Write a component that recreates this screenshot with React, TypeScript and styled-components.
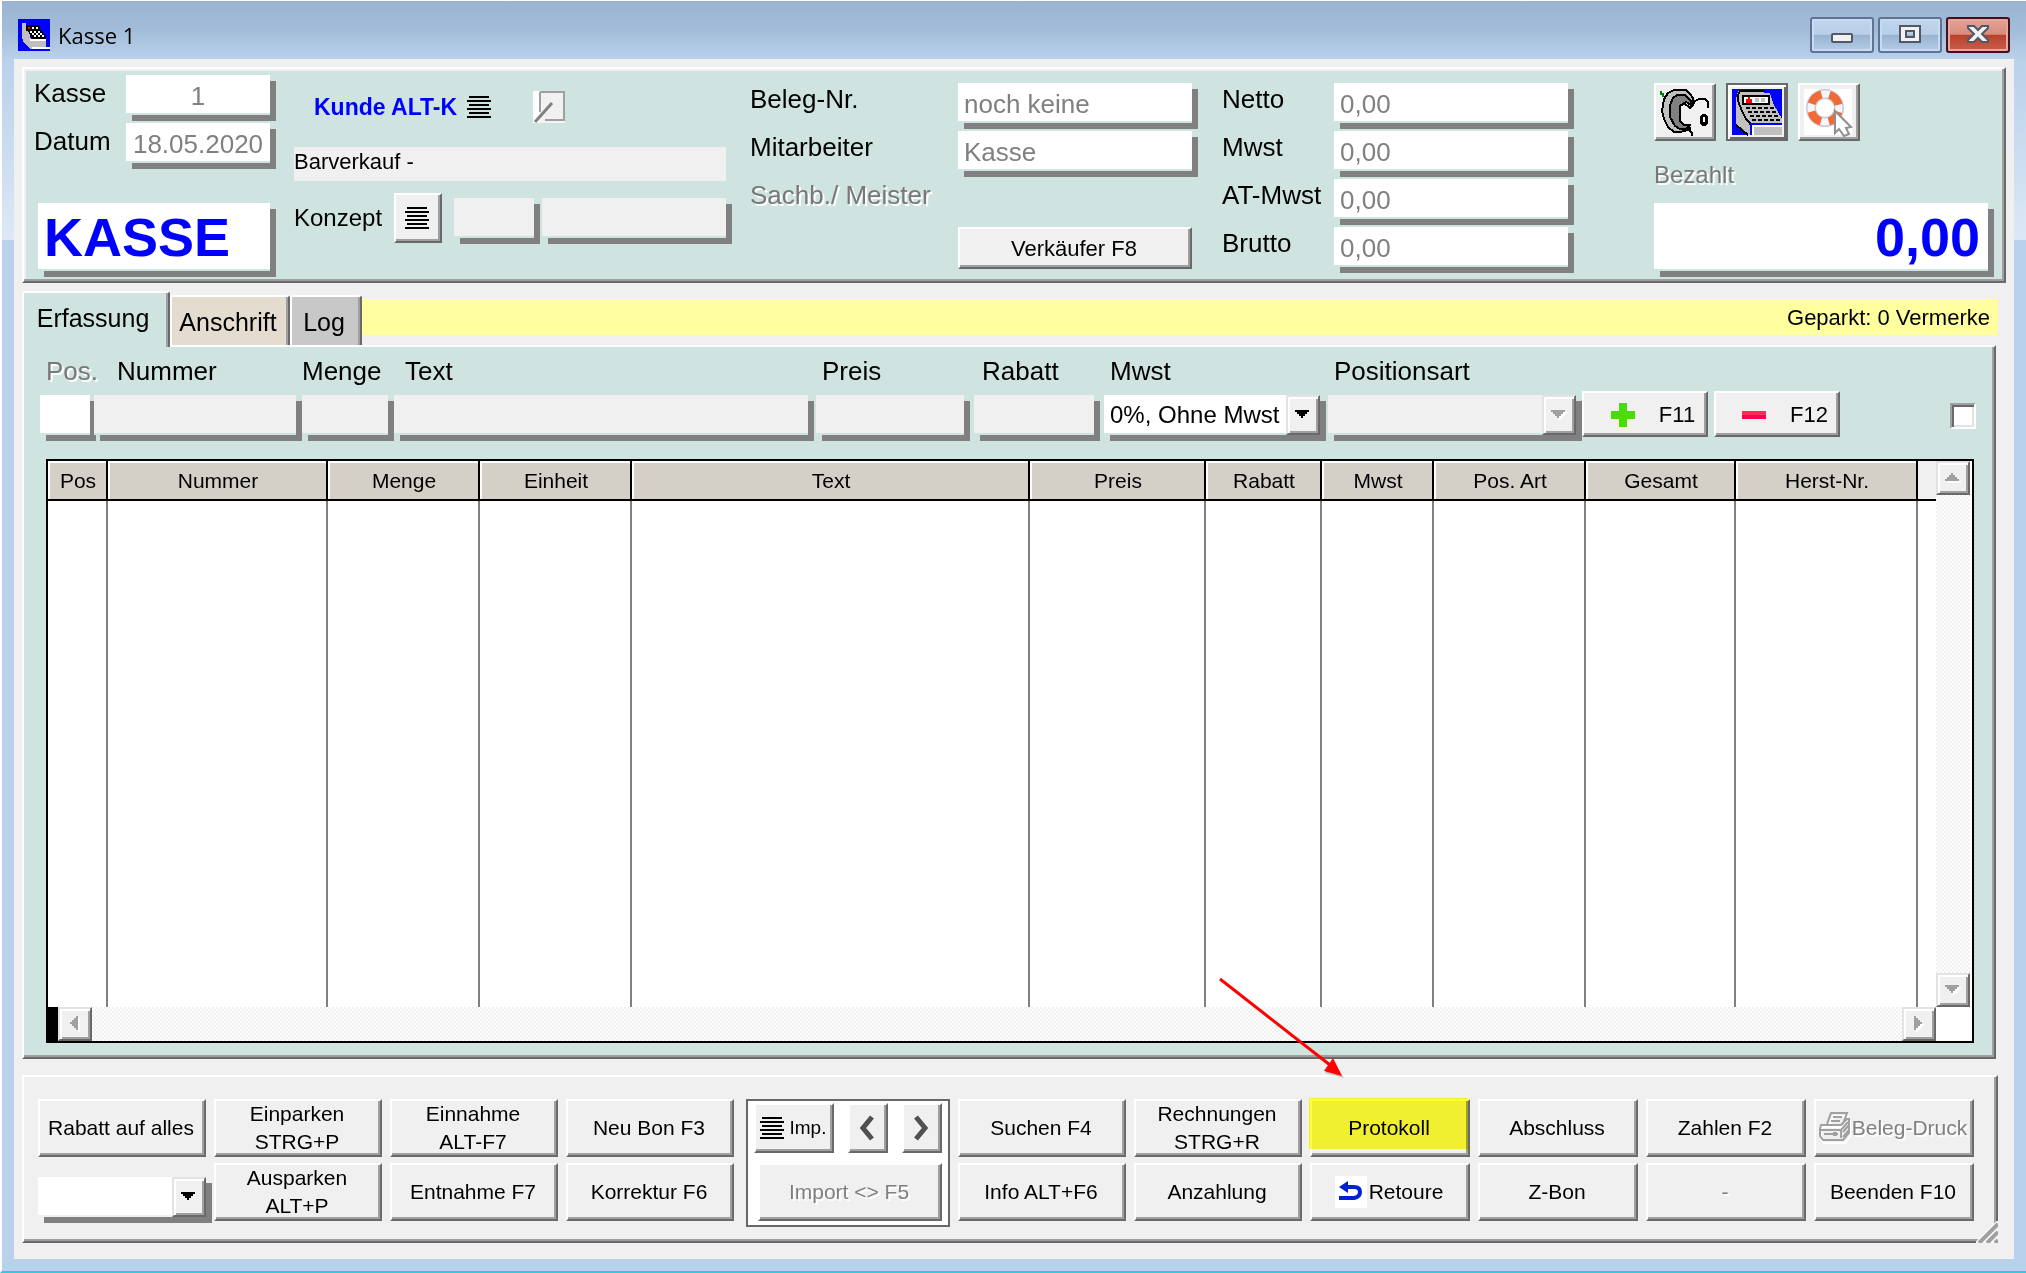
import React from "react";
import styled, { createGlobalStyle, css } from "styled-components";

const color = {
  face: "#f0f0f0",
  panel: "#cfe3e1",
  frame: "#b9d1ea",
  shadow: "#808080",
  mid: "#a0a0a0",
  dark: "#696969",
  header: "#d4d0c8",
  blue: "#0000ff",
};

const raised = css`
  border: 2px solid;
  border-color: #fff ${color.dark} ${color.dark} #fff;
  box-shadow: inset -2px -2px 0 ${color.mid};
`;

const GlobalStyle = createGlobalStyle`
  *, *::before, *::after { box-sizing: border-box; }
  body { margin: 0; background: #fff; }
  body, button, input, select {
    font-family: "Liberation Sans", Arial, sans-serif;
    color: #000;
  }
  button, input, select { margin: 0; padding: 0; border-radius: 0; }
  button:disabled, input:disabled, select:disabled { opacity: 1; }
`;

/* ---------- window frame ---------- */

const Window = styled.div`
  min-height: 100vh;
  display: flex;
  flex-direction: column;
  padding: 0 12px 12px;
  border-top: 1px solid #fff;
  border-left: 2px solid #fff;
  border-bottom: 2px solid #2fcbe0;
  background: linear-gradient(#b9d1ea, #dce8f6) 0 58px / 100% 181px no-repeat, ${color.frame};
`;

const TitleBar = styled.header`
  height: 58px;
  margin: 0 -12px;
  padding: 16px 16px 0;
  display: flex;
  align-items: flex-start;
  background: linear-gradient(#99b4d1, #a3bcd9 50%, ${color.frame});
`;

const TitleIcon = styled.svg`
  width: 32px;
  height: 32px;
  margin-top: 2px;
`;

const Title = styled.h1`
  margin: 0 auto 0 8px;
  font: 400 22px/36px "Open Sans", "Noto Sans", sans-serif;
`;

const WindowButtons = styled.div`
  display: flex;
  gap: 4px;
`;

const WindowButton = styled.button<{ $close?: boolean }>`
  width: 64px;
  height: 36px;
  display: grid;
  place-items: center;
  border: 2px solid ${(p) => (p.$close ? "#43101f" : "#5f7493")};
  border-radius: 3px;
  box-shadow: inset 0 0 0 2px ${(p) => (p.$close ? "#e8a79c" : "#c8dbf0")};
  background: ${(p) =>
    p.$close
      ? "linear-gradient(#e3a398, #d98b7d 48%, #b8402a 50%, #c9614c)"
      : "linear-gradient(#bfd5ec, #b9cfe8 48%, #98b3d0 50%, #b4cde8)"};
`;

const Content = styled.main`
  flex: 1;
  display: flex;
  flex-direction: column;
  padding: 8px 8px 16px;
  background: ${color.face};
`;

/* ---------- shared controls ---------- */

const Button = styled.button<{ $size?: number; $alignEnd?: boolean }>`
  ${raised}
  display: flex;
  align-items: center;
  justify-content: center;
  min-width: 0;
  overflow: hidden;
  padding-right: 2px;
  background: ${color.face};
  font-size: ${(p) => p.$size ?? 21}px;
  line-height: 28px;
  text-align: center;
  white-space: pre-line;
  align-self: ${(p) => (p.$alignEnd ? "end" : "auto")};
  &:disabled {
    color: ${color.shadow};
    text-shadow: 2px 2px 0 #fff;
  }
`;

const Field = styled.input<{ $gray?: boolean; $center?: boolean }>`
  display: block;
  width: 100%;
  height: 40px;
  padding: 4px 6px 0;
  border: 0;
  border-bottom: 2px solid ${color.panel};
  background: ${(p) => (p.$gray ? color.face : "#fff")};
  background-clip: padding-box;
  box-shadow: 6px 6px 0 ${color.shadow};
  color: ${color.shadow};
  font-size: 26px;
  text-align: ${(p) => (p.$center ? "center" : "left")};
`;

const BigField = styled.input<{ $right?: boolean }>`
  display: block;
  width: 100%;
  height: 68px;
  padding: 2px 8px 0 6px;
  border: 0;
  border-bottom: 2px solid ${color.panel};
  background: #fff;
  background-clip: padding-box;
  box-shadow: 6px 6px 0 ${color.shadow};
  color: ${color.blue};
  font-size: 54px;
  font-weight: 700;
  text-align: ${(p) => (p.$right ? "right" : "left")};
`;

const SelectBox = styled.div<{ $gray?: boolean; $ground?: string }>`
  display: grid;
  height: 40px;
  border-bottom: 2px solid ${(p) => p.$ground ?? color.panel};
  background: ${(p) => (p.$gray ? color.face : "#fff")};
  background-clip: padding-box;
  box-shadow: 6px 6px 0 ${color.shadow};
`;

const NativeSelect = styled.select`
  grid-area: 1 / 1;
  width: 100%;
  height: 38px;
  padding: 0 34px 0 6px;
  appearance: none;
  border: 0;
  background: transparent;
  font-size: 24px;
`;

const Arrow = styled.span`
  grid-area: 1 / 1;
  justify-self: end;
  width: 34px;
  height: 40px;
  display: grid;
  place-items: center;
  pointer-events: none;
  border: 2px solid;
  border-color: #e3e3e3 ${color.dark} ${color.dark} #e3e3e3;
  box-shadow: inset 2px 2px 0 #fff, inset -2px -2px 0 ${color.mid};
  background: ${color.face};
`;

/* ---------- header ---------- */

const HeaderPanel = styled.section`
  display: flex;
  height: 216px;
  padding: 0 16px 0 10px;
  border: 2px solid;
  border-color: #fff ${color.dark} ${color.dark} #fff;
  box-shadow: inset -2px -2px 0 ${color.mid}, inset 2px 2px 0 ${color.face};
  background: ${color.panel};
`;

const HeaderGroup = styled.div<{ $width: number; $top: number; $gap: number }>`
  flex: none;
  width: ${(p) => p.$width}px;
  padding-top: ${(p) => p.$top}px;
  margin-right: ${(p) => p.$gap}px;
`;

const LabelRow = styled.div<{ $label: number }>`
  display: grid;
  grid-template-columns: ${(p) => p.$label}px 1fr;
  height: 48px;
  align-items: start;
`;

const Label = styled.label<{ $muted?: boolean; $size?: number; $line?: number }>`
  font-size: ${(p) => p.$size ?? 26}px;
  line-height: ${(p) => p.$line ?? 32}px;
  white-space: nowrap;
  ${(p) =>
    p.$muted &&
    css`
      color: #787878;
      text-shadow: 2px 2px 0 #fff;
    `}
`;

const RegisterName = styled.div`
  padding: 32px 0 0 4px;
`;

const CustomerRow = styled.div`
  display: flex;
  align-items: center;
  height: 32px;
  padding-left: 20px;
`;

const CustomerButton = styled.button`
  display: flex;
  align-items: center;
  gap: 10px;
  margin-right: 42px;
  border: 0;
  background: none;
  color: ${color.blue};
  font-size: 23px;
  font-weight: 700;
`;

const PlainButton = styled.button`
  display: flex;
  border: 0;
  background: none;
`;

const SaleInfo = styled.div`
  height: 34px;
  margin: 24px 0 12px;
  background: ${color.face};
  font-size: 22px;
  line-height: 30px;
`;

const ConceptRow = styled.div`
  display: grid;
  grid-template-columns: 100px 48px 80px 184px;
  align-items: center;
  & > :nth-child(3) { margin-left: 12px; }
  & > :nth-child(4) { margin-left: 20px; }
`;

const ConceptField = styled.div<{ $width: number }>`
  width: ${(p) => p.$width}px;
`;

const ConceptButton = styled(Button)`
  height: 50px;
`;

const SellerButton = styled(Button)`
  grid-column: 2;
  height: 42px;
  padding-top: 2px;
`;

const PaidGroup = styled.div`
  width: 334px;
  margin-left: auto;
  padding-top: 14px;
`;

const ToolIcons = styled.div`
  display: flex;
  gap: 10px;
`;

const ToolButton = styled.button<{ $active?: boolean }>`
  ${raised}
  width: 62px;
  height: 58px;
  background: ${color.face};
  ${(p) =>
    p.$active &&
    css`
      border-color: ${color.dark};
      box-shadow: inset 2px 2px 0 #fff, inset -2px -2px 0 ${color.dark};
    `}
  svg { display: block; }
`;

const PaidLabel = styled(Label)`
  display: block;
  margin: 18px 0 12px;
`;

/* ---------- tabs ---------- */

const TabRow = styled.div`
  display: flex;
  align-items: flex-end;
  height: 54px;
  margin: 8px 8px 0 0;
`;

const Tab = styled.button<{ $bg: string; $width: number; $active?: boolean }>`
  width: ${(p) => p.$width}px;
  height: ${(p) => (p.$active ? 56 : 50)}px;
  padding: ${(p) => (p.$active ? "0 6px 4px 0" : "2px 4px 0 0")};
  border: 2px solid;
  border-color: #fff ${color.dark} transparent #fff;
  border-bottom-width: 0;
  border-radius: 3px 3px 0 0;
  box-shadow: inset -2px 0 0 ${color.mid};
  background: ${(p) => p.$bg};
  font-size: 25px;
  ${(p) =>
    p.$active &&
    css`
      position: relative;
      margin-bottom: -2px;
    `}
`;

const ParkedBar = styled.div`
  flex: 1;
  align-self: flex-start;
  height: 36px;
  margin-top: 8px;
  padding-right: 8px;
  background: #ffff9f;
  font-size: 22px;
  line-height: 38px;
  text-align: right;
`;

const TabPanel = styled.section`
  flex: 1;
  display: flex;
  flex-direction: column;
  margin-right: 10px;
  ${raised}
  background: ${color.panel};
`;

const EntryRow = styled.form`
  display: grid;
  grid-template-columns: 54px 208px 92px 1fr 158px 130px 224px 254px 132px 236px 26px;
  padding: 8px 18px 0 16px;
`;

const EntryCell = styled.div<{ $space: number; $indent: number }>`
  display: flex;
  flex-direction: column;
  gap: 8px;
  min-width: 0;
  padding: 0 ${(p) => p.$space}px 2px 0;
  & > label { padding-left: ${(p) => p.$indent}px; }
`;

const LineButton = styled(Button)`
  width: 126px;
  height: 46px;
  gap: 24px;
  padding: 2px 0 0 16px;
`;

const TickBox = styled.input`
  appearance: none;
  align-self: end;
  width: 26px;
  height: 26px;
  margin-bottom: 8px;
  border: 2px solid;
  border-color: ${color.mid} #fff #fff ${color.mid};
  box-shadow: inset 2px 2px 0 ${color.dark}, inset -2px -2px 0 #e3e3e3;
  background: #fff;
`;

/* ---------- positions grid ---------- */

const GridFrame = styled.div`
  flex: 1;
  display: grid;
  grid-template: 1fr 34px / 1fr 34px;
  min-height: 400px;
  margin: 22px 20px 14px 22px;
  padding-right: 2px;
  border: 2px solid #000;
  background: #fff;
`;

const Table = styled.table`
  width: 100%;
  height: 100%;
  table-layout: fixed;
  border-collapse: separate;
  border-spacing: 0;
`;

const HeadCell = styled.th`
  height: 40px;
  padding: 2px 0 0 2px;
  border: solid #000;
  border-width: 0 2px 2px 0;
  box-shadow: inset 2px 2px 0 #fff;
  background: ${color.header};
  font-size: 21px;
  font-weight: 400;
  &:last-child {
    border-right: 0;
    box-shadow: none;
    background: ${color.face};
  }
`;

const BodyCell = styled.td`
  padding: 0;
  border-right: 2px solid ${color.shadow};
  &:last-child { border-right: 0; }
`;

const dither = css`
  background: repeating-conic-gradient(#f0f0f0 0 25%, #fff 0 50%) 0 0 / 4px 4px;
`;

const VerticalScroll = styled.div`
  ${dither}
  display: flex;
  flex-direction: column;
  justify-content: space-between;
`;

const HorizontalScroll = styled.div`
  ${dither}
  display: flex;
  justify-content: space-between;
  border-left: 10px solid #000;
`;

const ScrollButton = styled.button`
  width: 34px;
  height: 34px;
  display: grid;
  place-items: center;
  border: 2px solid;
  border-color: #e3e3e3 ${color.dark} ${color.dark} #e3e3e3;
  box-shadow: inset 2px 2px 0 #fff, inset -2px -2px 0 ${color.mid};
  background: ${color.face};
`;

/* ---------- action bar ---------- */

const ActionPanel = styled.section`
  ${raised}
  display: grid;
  grid-template-columns: repeat(4, 168fr) 208fr repeat(2, 168fr) repeat(4, 160fr);
  grid-template-rows: 58px 58px;
  gap: 6px 8px;
  height: 168px;
  margin: 16px 8px 0 0;
  padding: 22px 22px 0 14px;
  background: ${color.face};
`;

const DiscountCell = styled.div`
  padding-top: 14px;
`;

const ImportBox = styled.div`
  grid-row: 1 / 3;
  grid-column: 5;
  height: 128px;
  margin: 0 0 -6px 4px;
  padding: 2px 6px 4px;
  display: grid;
  grid-template: 50px 58px / 80px 40px 40px;
  justify-content: space-between;
  gap: 10px 0;
  border: 2px solid ${color.dark};
  background: #fff;
`;

const ImportButton = styled(Button)`
  grid-column: 1 / 4;
  margin-left: 4px;
`;

const IconText = styled.span<{ $gap: number }>`
  display: flex;
  align-items: center;
  gap: ${(p) => p.$gap}px;
  white-space: nowrap;
`;

const Marked = styled.div`
  position: relative;
  display: grid;
`;

const Highlight = styled.span`
  position: absolute;
  inset: -1px 2px 8px -1px;
  background: #ffff33;
  mix-blend-mode: multiply;
  pointer-events: none;
`;

const Pointer = styled.svg`
  position: absolute;
  left: -96px;
  top: -126px;
  width: 136px;
  height: 108px;
  pointer-events: none;
`;

const Grip = styled.svg`
  position: absolute;
  right: -24px;
  bottom: -22px;
`;

/* ---------- drawings ---------- */

const Bars = () => (
  <svg width="24" height="22" viewBox="0 0 24 22" shapeRendering="crispEdges">
    {[0, 4, 8, 12, 16, 20].map((y, i) => (
      <rect key={y} x={i % 2 ? 0 : 2} y={y} width={i % 2 ? 24 : 20} height="2" fill="#000" />
    ))}
  </svg>
);

const rotation = { down: 0, left: 90, up: 180, right: 270 };

const Triangle = ({ dir, muted }: { dir: keyof typeof rotation; muted?: boolean }) => {
  const turn = `rotate(${rotation[dir]} 8 8)`;
  const shape = "M1 4h14v2h-2v2h-2v2H9v2H7v-2H5V8H3V6H1z";
  return (
    <svg width="18" height="18" viewBox="0 0 18 18" shapeRendering="crispEdges">
      {muted && <path d={shape} fill="#fff" transform={`translate(2 2) ${turn}`} />}
      <path d={shape} fill={muted ? "#a0a0a0" : "#000"} transform={turn} />
    </svg>
  );
};

const AppIcon = () => (
  <TitleIcon viewBox="0 0 32 32" shapeRendering="crispEdges">
    <path d="M0 0h32v32H0z" fill="#00f" />
    <path d="M4 4h4v2h2l2 12 2 4v8h-2l-6-6-2-6z" fill="#c0c0c0" />
    <path d="M8 6h14v4l6 8v2H14l-4-8H8z" fill="#000" />
    <path d="M10 8h2v2h-2z" fill="#f00" />
    <path d="M14 8h2v2h-2zM18 8h2v2h-2zM12 12h2v2h-2zM16 12h2v2h-2zM20 12h2v2h-2zM14 14h2v2h-2zM18 14h2v2h-2zM22 14h2v2h-2zM16 16h2v2h-2zM20 16h2v2h-2zM24 16h2v2h-2z" fill="#fff" />
    <path d="M12 22h16v6H12z" fill="#c0c0c0" />
    <path d="M12 20h16v2H12zM14 28h18v2H14z" fill="#fff" />
  </TitleIcon>
);

const PenIcon = () => (
  <svg width="32" height="32" viewBox="0 0 32 32">
    <path d="M0 0h32v32H0z" fill="#f4f4f4" />
    <path d="M0 0h6v32H0z" fill="#fff" />
    <path d="M7 1h24v28H12" fill="#f1f1f1" stroke="#a0a0a0" strokeWidth="2" />
    <path d="M7 1v20" stroke="#a0a0a0" strokeWidth="2" />
    <path d="M2 31L19 12" stroke="#808080" strokeWidth="3" />
  </svg>
);

const PhoneIcon = () => (
  <svg width="58" height="54" viewBox="2 2 58 54" shapeRendering="crispEdges">
    <path d="M6 8h2v2h2v4H8v-2H6z" fill="#008000" />
    <path d="M20 7h12l4 4 3 4v6h-3l-4-2-6 3v16l4 4h6l-2 5-8 2h-6l-6-5-4-8-2-8 2-12 4-6z" fill="#c0c0c0" stroke="#000" strokeWidth="2" />
    <path d="M23 12h8l6 6v4l-5-3-6 4v15l4 4h5l-3 4h-6l-5-3-5-9v-12l3-7z" fill="#808080" stroke="#000" strokeWidth="2" />
    <path d="M30 20l6 5 3-3 2-4 4-2h6l3 3v6M36 44v4l2 2v3" fill="none" stroke="#000" strokeWidth="2" />
    <path d="M48 31h4l2 3v6l-2 3h-4l-2-3v-6z" fill="#000" />
    <path d="M49 34h2v5h-2z" fill="#fff" />
  </svg>
);

const CashIcon = () => (
  <svg width="58" height="54" viewBox="2 2 58 54" shapeRendering="crispEdges">
    <path d="M6 6h50v46H6z" fill="#00f" />
    <path d="M12 8h26v2h6l4 12 8 14v4H24v12h-4L10 42V16z" fill="#c0c0c0" />
    <path d="M38 8H14l-2 4v6l4 10 4 8 4 4v2M10 42l12 10" fill="none" stroke="#000" strokeWidth="2" />
    <path d="M17 13h26v8H17z" fill="#fff" stroke="#000" strokeWidth="2" />
    <path d="M20 16h6v4h-6zM22 14h2v2h-2z" fill="#f00" />
    <path d="M29 15h4v4h-4zM35 15h4v4h-4z" fill="#c0c0c0" />
    <path d="M20 25h28M22 29h28M24 33h30M26 37h30" fill="none" stroke="#000" strokeWidth="2" strokeDasharray="4 2" />
    <path d="M24 40h32v2H26v10h-2z" fill="#00f" />
    <path d="M26 42h30v2H28v8h-2z" fill="#fff" />
    <path d="M28 44h28v8H28z" fill="#c0c0c0" />
  </svg>
);

const HelpIcon = () => (
  <svg width="58" height="54" viewBox="2 2 58 54">
    <path d="M6 6h48v46H6z" fill="#fff" />
    <circle cx="27" cy="25" r="14" fill="none" stroke="#c8c8d6" strokeWidth="10" />
    <circle cx="27" cy="25" r="14" fill="none" stroke="#f6f6f8" strokeWidth="7" />
    <circle cx="27" cy="25" r="14" fill="none" stroke="#f26a35" strokeWidth="8" strokeDasharray="14 8" strokeDashoffset="-4" />
    <path d="M37 28v22l4-4 5 7 5-2-3-6 5-1z" fill="#fff" stroke="#909090" strokeWidth="2" />
  </svg>
);

const PrinterIcon = () => (
  <svg width="32" height="32" viewBox="0 0 32 32" fill="none" strokeWidth="2">
    <path d="M3 14h20l6-6h2v14l-6 8H4l-3-4v-9zM9 13l5-10h14l-4 10" stroke="#fff" transform="translate(1 1)" />
    <path d="M8 12l4-11h16l-4 11M14 5h9M12 9h9M2 13h20l6-6h2v14l-6 7H4l-3-4v-7zM2 18h20v8M22 18l7-8M24 20l6-7M5 22h14M24 25l6-7" stroke="#a0a0a0" />
    <path d="M14 20h4v4h-4z" fill="#a0a0a0" />
  </svg>
);

const ReturnIcon = () => (
  <svg width="32" height="32" viewBox="0 0 32 32">
    <path d="M0 0h32v32H0z" fill="#fff" />
    <path d="M4 11l9-6v12z" fill="#0020d8" />
    <path d="M10 11h9q6 0 6 5t-6 6H4" fill="none" stroke="#0020d8" strokeWidth="4" />
  </svg>
);

const Chevron = ({ right }: { right?: boolean }) => (
  <svg width="18" height="26" viewBox="0 0 18 26">
    <path d={right ? "M4 2l9 11-9 11" : "M14 2L5 13l9 11"} fill="none" stroke="#505050" strokeWidth="5" />
  </svg>
);

/* ---------- data ---------- */

const columns: [string, number | undefined][] = [
  ["Pos", 60],
  ["Nummer", 220],
  ["Menge", 152],
  ["Einheit", 152],
  ["Text", undefined],
  ["Preis", 176],
  ["Rabatt", 116],
  ["Mwst", 112],
  ["Pos. Art", 152],
  ["Gesamt", 150],
  ["Herst-Nr.", 182],
  ["", 18],
];

const sums = ["Netto", "Mwst", "AT-Mwst", "Brutto"];

const entryFields = [
  { name: "Pos.", space: 4, indent: 6, muted: true },
  { name: "Nummer", space: 6, indent: 23 },
  { name: "Menge", space: 6, indent: 0 },
  { name: "Text", space: 8, indent: 11 },
  { name: "Preis", space: 10, indent: 6 },
  { name: "Rabatt", space: 10, indent: 8 },
];

export default function App() {
  return (
    <>
      <GlobalStyle />
      <Window>
        <TitleBar>
          <AppIcon />
          <Title>Kasse 1</Title>
          <WindowButtons>
            <WindowButton aria-label="Minimieren">
              <svg width="22" height="22" viewBox="0 0 22 22">
                <rect x="1" y="10" width="20" height="8" rx="1" fill="#f2f2f2" stroke="#50586a" strokeWidth="2" />
              </svg>
            </WindowButton>
            <WindowButton aria-label="Maximieren">
              <svg width="22" height="22" viewBox="0 0 22 22">
                <path d="M1 2h20v16H1zM7 7h8v6H7z" fillRule="evenodd" fill="#f2f2f2" stroke="#50586a" strokeWidth="2" />
              </svg>
            </WindowButton>
            <WindowButton $close aria-label="Schließen">
              <svg width="24" height="22" viewBox="0 0 24 22">
                <path d="M2 2h6l4 4 4-4h6v2l-6 6 6 6v2h-6l-4-4-4 4H2v-2l6-6-6-6z" fill="#f2f2f2" stroke="#50586a" strokeWidth="2" />
              </svg>
            </WindowButton>
          </WindowButtons>
        </TitleBar>

        <Content>
          <HeaderPanel>
            <HeaderGroup $width={236} $top={6} $gap={24}>
              <LabelRow $label={92}>
                <Label htmlFor="kasse" $line={36}>Kasse</Label>
                <Field id="kasse" $center readOnly value="1" />
              </LabelRow>
              <LabelRow $label={92}>
                <Label htmlFor="datum" $line={36}>Datum</Label>
                <Field id="datum" $center readOnly value="18.05.2020" />
              </LabelRow>
              <RegisterName>
                <BigField aria-label="Modus" readOnly value="KASSE" />
              </RegisterName>
            </HeaderGroup>

            <HeaderGroup $width={432} $top={22} $gap={24}>
              <CustomerRow>
                <CustomerButton>
                  Kunde ALT-K <Bars />
                </CustomerButton>
                <PlainButton aria-label="Kunde bearbeiten">
                  <PenIcon />
                </PlainButton>
              </CustomerRow>
              <SaleInfo>Barverkauf -</SaleInfo>
              <ConceptRow>
                <Label htmlFor="konzept" $size={24}>Konzept</Label>
                <ConceptButton aria-label="Konzept wählen">
                  <Bars />
                </ConceptButton>
                <ConceptField $width={80}>
                  <Field id="konzept" $gray />
                </ConceptField>
                <ConceptField $width={184}>
                  <Field aria-label="Konzept Name" $gray />
                </ConceptField>
              </ConceptRow>
            </HeaderGroup>

            <HeaderGroup $width={442} $top={14} $gap={30}>
              <LabelRow $label={208}>
                <Label htmlFor="beleg">Beleg-Nr.</Label>
                <Field id="beleg" readOnly value="noch keine" />
              </LabelRow>
              <LabelRow $label={208}>
                <Label htmlFor="mitarbeiter">Mitarbeiter</Label>
                <Field id="mitarbeiter" readOnly value="Kasse" />
              </LabelRow>
              <LabelRow $label={208}>
                <Label as="span" $muted>Sachb./ Meister</Label>
              </LabelRow>
              <LabelRow $label={208}>
                <SellerButton $size={22}>Verkäufer F8</SellerButton>
              </LabelRow>
            </HeaderGroup>

            <HeaderGroup $width={346} $top={14} $gap={0}>
              {sums.map((name) => (
                <LabelRow key={name} $label={112}>
                  <Label htmlFor={`sum-${name}`}>{name}</Label>
                  <Field id={`sum-${name}`} readOnly value="0,00" />
                </LabelRow>
              ))}
            </HeaderGroup>

            <PaidGroup>
              <ToolIcons>
                <ToolButton aria-label="Telefon"><PhoneIcon /></ToolButton>
                <ToolButton $active aria-label="Kasse"><CashIcon /></ToolButton>
                <ToolButton aria-label="Hilfe"><HelpIcon /></ToolButton>
              </ToolIcons>
              <PaidLabel htmlFor="bezahlt" $muted $size={24}>Bezahlt</PaidLabel>
              <BigField id="bezahlt" $right readOnly value="0,00" />
            </PaidGroup>
          </HeaderPanel>

          <TabRow>
            <Tab $active $bg={color.panel} $width={148}>Erfassung</Tab>
            <Tab $bg="#e3dccf" $width={120}>Anschrift</Tab>
            <Tab $bg="#c8c8c8" $width={72}>Log</Tab>
            <ParkedBar>Geparkt: 0 Vermerke</ParkedBar>
          </TabRow>

          <TabPanel>
            <EntryRow>
              {entryFields.map((f) => (
                <EntryCell key={f.name} $space={f.space} $indent={f.indent}>
                  <Label htmlFor={`entry-${f.name}`} $muted={f.muted}>{f.name}</Label>
                  <Field id={`entry-${f.name}`} $gray={!f.muted} />
                </EntryCell>
              ))}
              <EntryCell $space={8} $indent={6}>
                <Label htmlFor="entry-mwst">Mwst</Label>
                <SelectBox>
                  <NativeSelect id="entry-mwst">
                    <option>0%, Ohne Mwst</option>
                  </NativeSelect>
                  <Arrow><Triangle dir="down" /></Arrow>
                </SelectBox>
              </EntryCell>
              <EntryCell $space={6} $indent={6}>
                <Label htmlFor="entry-art">Positionsart</Label>
                <SelectBox $gray>
                  <NativeSelect id="entry-art" disabled />
                  <Arrow><Triangle dir="down" muted /></Arrow>
                </SelectBox>
              </EntryCell>
              <LineButton type="button" $size={22} $alignEnd>
                <svg width="24" height="24" viewBox="0 0 24 24">
                  <path d="M8 0h8v8h8v8h-8v8H8v-8H0V8h8z" fill="#4ade00" />
                </svg>
                F11
              </LineButton>
              <LineButton type="button" $size={22} $alignEnd>
                <svg width="24" height="8" viewBox="0 0 24 8">
                  <path d="M0 0h24v4H0z" fill="#ff2a55" />
                  <path d="M0 4h24v4H0z" fill="#ff0050" />
                </svg>
                F12
              </LineButton>
              <TickBox type="checkbox" aria-label="Auswahl" />
            </EntryRow>

            <GridFrame>
              <Table>
                <colgroup>
                  {columns.map(([name, width]) => (
                    <col key={name} style={{ width }} />
                  ))}
                </colgroup>
                <thead>
                  <tr>
                    {columns.map(([name]) => (
                      <HeadCell key={name} scope="col">{name}</HeadCell>
                    ))}
                  </tr>
                </thead>
                <tbody>
                  <tr>
                    {columns.map(([name]) => (
                      <BodyCell key={name} />
                    ))}
                  </tr>
                </tbody>
              </Table>
              <VerticalScroll>
                <ScrollButton aria-label="Nach oben"><Triangle dir="up" muted /></ScrollButton>
                <ScrollButton aria-label="Nach unten"><Triangle dir="down" muted /></ScrollButton>
              </VerticalScroll>
              <HorizontalScroll>
                <ScrollButton aria-label="Nach links"><Triangle dir="left" muted /></ScrollButton>
                <ScrollButton aria-label="Nach rechts"><Triangle dir="right" muted /></ScrollButton>
              </HorizontalScroll>
            </GridFrame>
          </TabPanel>

          <ActionPanel>
            <Button>Rabatt auf alles</Button>
            <Button>{"Einparken\nSTRG+P"}</Button>
            <Button>{"Einnahme\nALT-F7"}</Button>
            <Button>Neu Bon F3</Button>
            <ImportBox>
              <Button $size={19}>
                <IconText $gap={6}><Bars />Imp.</IconText>
              </Button>
              <Button aria-label="Zurück"><Chevron /></Button>
              <Button aria-label="Weiter"><Chevron right /></Button>
              <ImportButton disabled>{"Import <> F5"}</ImportButton>
            </ImportBox>
            <Button>Suchen F4</Button>
            <Button>{"Rechnungen\nSTRG+R"}</Button>
            <Marked>
              <Button>Protokoll</Button>
              <Highlight />
              <Pointer viewBox="0 0 136 108">
                <path d="M6 6L116 92" stroke="#f00" strokeWidth="3" />
                <path d="M130 105l-19-5 9-11z" fill="#909090" opacity="0.5" />
                <path d="M128 103l-18-5 9-13z" fill="#f00" />
              </Pointer>
            </Marked>
            <Button>Abschluss</Button>
            <Button>Zahlen F2</Button>
            <Button disabled>
              <IconText $gap={1}><PrinterIcon />Beleg-Druck</IconText>
            </Button>
            <DiscountCell>
              <SelectBox $ground={color.face}>
                <NativeSelect aria-label="Rabatt auf alles" />
                <Arrow><Triangle dir="down" /></Arrow>
              </SelectBox>
            </DiscountCell>
            <Button>{"Ausparken\nALT+P"}</Button>
            <Button>Entnahme F7</Button>
            <Button>Korrektur F6</Button>
            <Button>Info ALT+F6</Button>
            <Button>Anzahlung</Button>
            <Button>
              <IconText $gap={2}><ReturnIcon />Retoure</IconText>
            </Button>
            <Button>Z-Bon</Button>
            <Button disabled>-</Button>
            <Marked>
              <Button>Beenden F10</Button>
              <Grip width="22" height="22" viewBox="0 0 22 22">
                <path d="M0 22L22 0v22z" fill="#f0f0f0" />
                <path d="M0 22L22 0M8 22L22 8M16 22l6-6" stroke="#fff" strokeWidth="2" />
                <path d="M3 22L22 3M11 22l11-11M19 22l3-3" stroke="#a0a0a0" strokeWidth="4" />
              </Grip>
            </Marked>
          </ActionPanel>
        </Content>
      </Window>
    </>
  );
}
